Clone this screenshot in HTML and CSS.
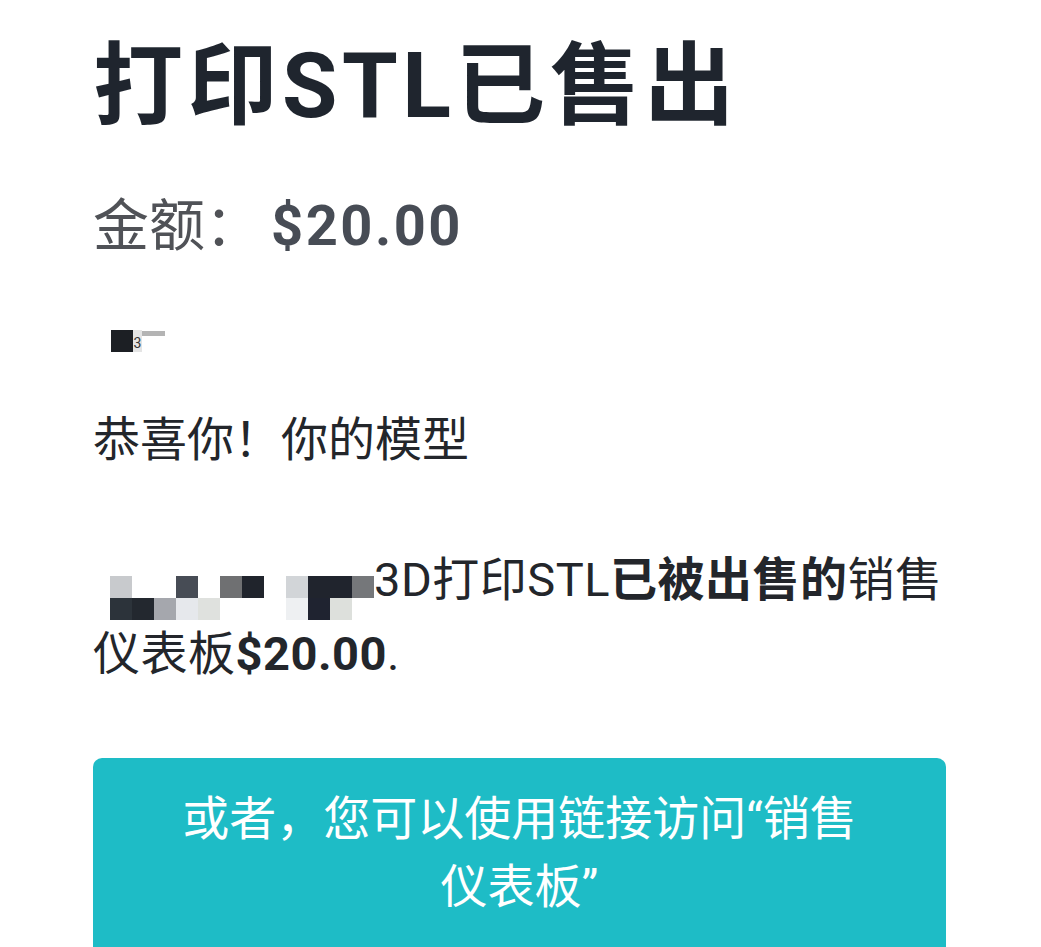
FILE: index.html
```html
<!DOCTYPE html>
<html lang="zh-CN">
<head>
  <meta charset="UTF-8" />
  <meta name="viewport" content="width=device-width, initial-scale=1.0"/>
  <title>打印STL已售出</title>
  <link rel="stylesheet" href="styles.css">
</head>
<body>
  <div class="mail">
    <h1 class="title">打印STL已售出</h1>

    <p class="amount">金额：<b>$20.00</b></p>

    <!-- 打码的头像 -->
    <div class="avatar">
      <span class="avatar-dark"></span>
      <span class="avatar-mid">3</span>
      <span class="avatar-bar"></span>
    </div>

    <p class="greet">恭喜你！你的模型</p>

    <p class="message"><span class="mosaic"><i class="m0"></i><i class="mw"></i><i class="mw"></i><i class="m3"></i><i class="mw"></i><i class="m5"></i><i class="m6"></i><i class="mw"></i><i class="m8"></i><i class="m9"></i><i class="m9"></i><i class="m11"></i><i class="r0"></i><i class="r1"></i><i class="r2"></i><i class="r3"></i><i class="r4"></i><i class="mw"></i><i class="mw"></i><i class="mw"></i><i class="r8"></i><i class="r9"></i><i class="r10"></i><i class="mw"></i></span>3D打印STL<b>已被出售的</b>销售仪表板<b>$20.00</b>.</p>

    <a class="button" href="#">或者，您可以使用链接访问“销售仪表板”</a>
  </div>
</body>
</html>
```

FILE: styles.css
```css
body {
  margin: 0;
  background: #fff;
  font-family: Roboto, "Noto Sans CJK SC", sans-serif;
  color: #23262b;
}

.mail {
  width: 853px;
  padding: 0 0 0 93px;
}

.title {
  margin: 0;
  padding-top: 25px;
  font-size: 90px;
  line-height: 124px;
  font-weight: 700;
  color: #1f252e;
  letter-spacing: 4.5px;
}

.amount {
  margin: 45px 0 0;
  font-size: 56px;
  line-height: 64px;
  color: #505257;
}

.amount b {
  margin-left: 10px;
  color: #474c55;
  font-weight: 700;
  letter-spacing: 2.5px;
}

.avatar {
  display: flex;
  align-items: flex-start;
  margin: 72px 0 0 18px;
  height: 24px;
}

.avatar-dark {
  width: 22px;
  height: 22px;
  background: #1c1f24;
}

.avatar-mid {
  width: 9px;
  height: 22px;
  background: #e4e4e4;
  font-size: 14px;
  line-height: 26px;
  color: #333;
  text-align: center;
}

.avatar-bar {
  width: 23px;
  height: 5px;
  margin-top: 1px;
  background: #b4b4b4;
}

.greet {
  margin: 52px 0 0;
  font-size: 47px;
  line-height: 68px;
  color: #23262b;
}

.message {
  margin: 72px 0 0;
  font-size: 47px;
  line-height: 67px;
  color: #23262b;
  letter-spacing: 0.5px;
}

.message b {
  font-weight: 700;
}

.mosaic {
  display: inline-grid;
  grid-template-columns: repeat(12, 22px);
  grid-auto-rows: 22px;
  margin-left: 17px;
  vertical-align: -2px;
}

.mosaic i { display: block; }
.mosaic .mw { background: #fff; }
.mosaic .m0 { background: #c8cacd; }
.mosaic .m3 { background: #474c55; }
.mosaic .m5 { background: #6f7072; }
.mosaic .m6 { background: #20242c; }
.mosaic .m8 { background: #d2d5d8; }
.mosaic .m9 { background: #20242d; }
.mosaic .m11 { background: #75777a; }
.mosaic .r0 { background: #2c333a; }
.mosaic .r1 { background: #23282f; }
.mosaic .r2 { background: #a5a7ad; }
.mosaic .r3 { background: #e6e8ec; }
.mosaic .r4 { background: #dfe1de; }
.mosaic .r8 { background: #eef0f2; }
.mosaic .r9 { background: #1f2330; }
.mosaic .r10 { background: #dde0dc; }

.button {
  display: block;
  margin-top: 71px;
  padding: 27px 72px 40px;
  border-radius: 9px;
  background: #1ebcc6;
  color: #fff;
  font-size: 47px;
  line-height: 68px;
  text-align: center;
  text-decoration: none;
}
```
